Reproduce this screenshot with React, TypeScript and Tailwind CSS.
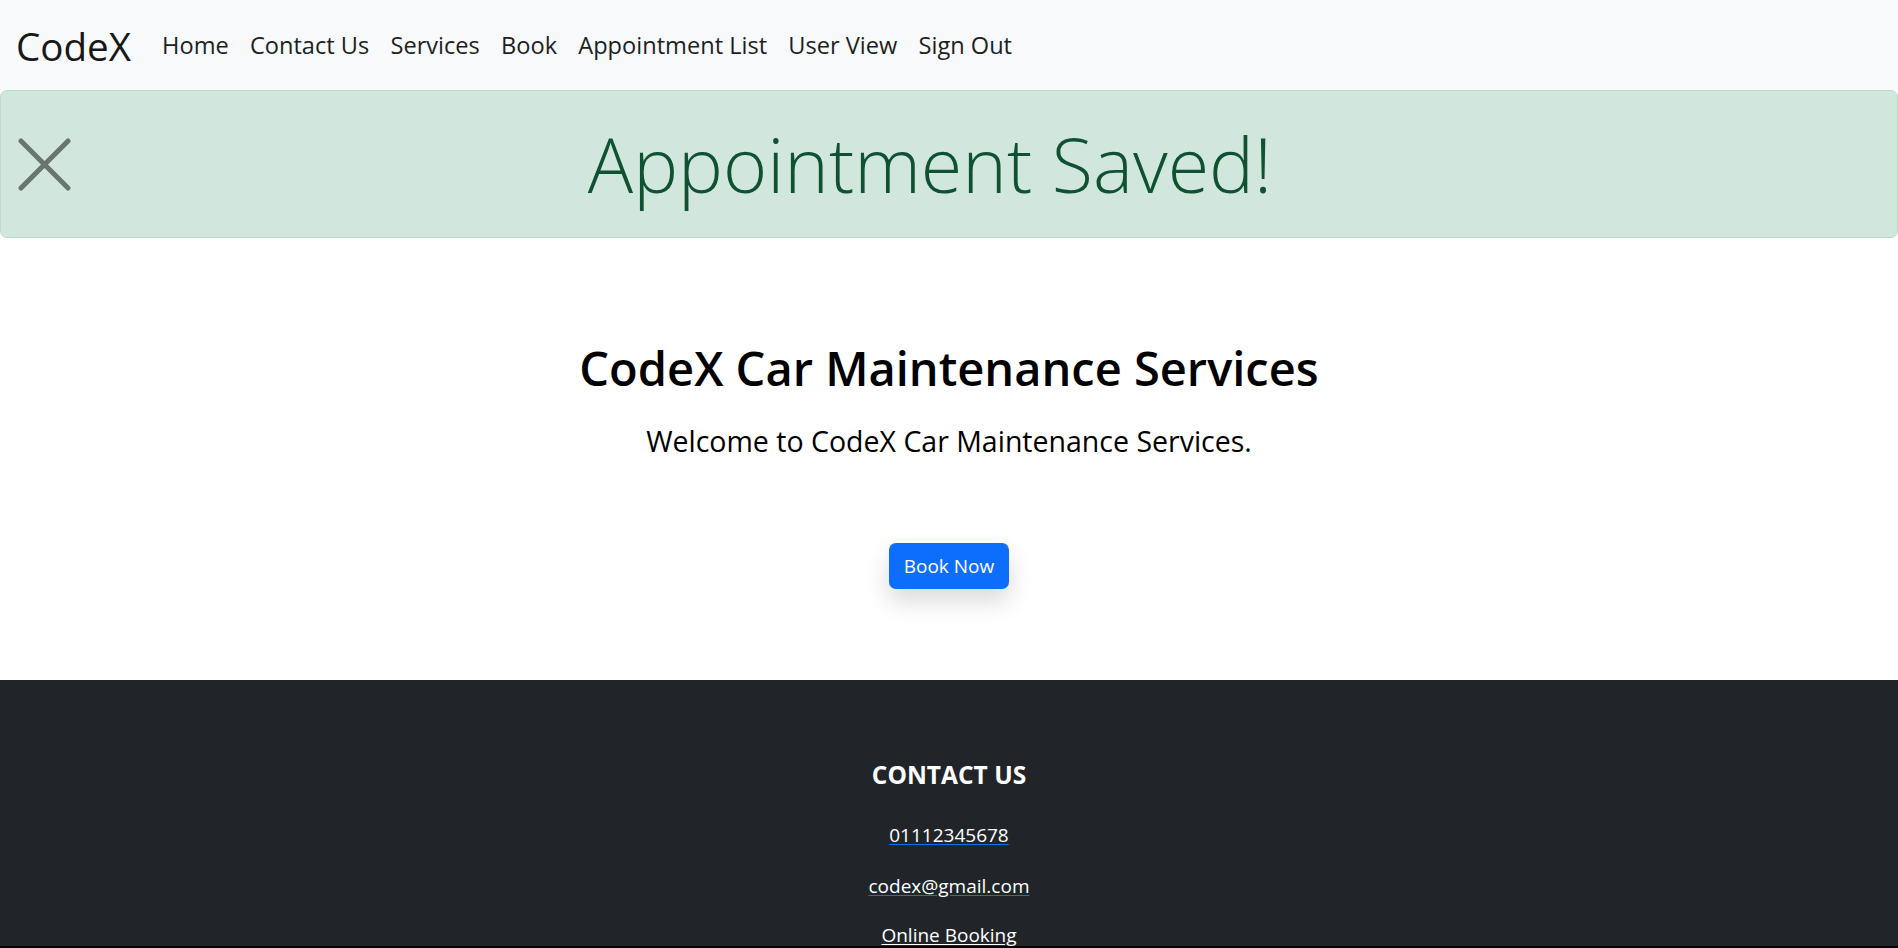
import React from "react";

export default function App() {
  const links = ["Home", "Contact Us", "Services", "Book", "Appointment List", "User View", "Sign Out"];
  return (
    <div className="h-[948px] overflow-hidden flex flex-col bg-white border-b-2 border-black font-['Open_Sans',sans-serif]">
      <nav className="h-[90px] shrink-0 bg-[#f8f9fa] flex items-center pl-[16px] pt-[2px]">
        <span className="text-[38.6px] leading-none text-[#171717] mr-[31px]">CodeX</span>
        <div className="flex items-center gap-[21.2px]">
          {links.map((l) => (
            <a key={l} className="text-[23.6px] leading-none text-[#1c1f23]">{l}</a>
          ))}
        </div>
      </nav>

      <div className="relative h-[148px] shrink-0 bg-[#d1e7dd] border border-[#badbcc] rounded-[7px] flex items-center justify-center pl-[24px] pr-[62px]">
        <button className="absolute left-[17px] top-[47px]" aria-label="Close">
          <svg width="53" height="53" viewBox="0 0 53 53">
            <path d="M3 3 L50 50 M50 3 L3 50" stroke="#6a756f" strokeWidth="5" strokeLinecap="round" fill="none" />
          </svg>
        </button>
        <h2 className="text-[75.5px] font-light leading-none text-[#0f5132]">Appointment Saved!</h2>
      </div>

      <main className="h-[442px] shrink-0 flex flex-col items-center pt-[101px]">
        <h1 className="text-[47px] font-semibold leading-[58px] text-black">CodeX Car Maintenance Services</h1>
        <p className="mt-[23px] text-[28.5px] leading-[42px] text-black">Welcome to CodeX Car Maintenance Services.</p>
        <button className="mt-[81px] h-[46px] px-[15px] rounded-[7px] bg-[#0d6efd] text-white text-[19px] shadow-[0_12px_24px_rgba(0,0,0,0.15)]">
          Book Now
        </button>
      </main>

      <footer className="flex-1 bg-[#212529] flex flex-col items-center pt-[77px] pb-[40px]">
        <h5 className="text-[24.5px] leading-[36px] font-bold text-white">CONTACT US</h5>
        <a className="mt-[28px] text-[19px] leading-[28px] text-white underline decoration-[#0d6efd] underline-offset-[2px]">01112345678</a>
        <a className="mt-[23px] text-[19px] leading-[28px] text-white underline decoration-[#0d6efd] underline-offset-[2px]">codex@gmail.com</a>
        <a className="mt-[21px] text-[19px] leading-[28px] text-white underline underline-offset-[2px]">Online Booking</a>
      </footer>
    </div>
  );
}
